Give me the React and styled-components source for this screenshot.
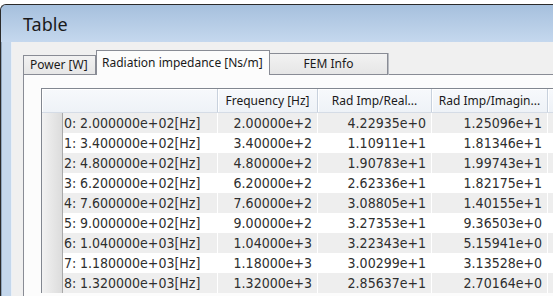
import React from "react";
import styled, { createGlobalStyle } from "styled-components";

const GlobalStyle = createGlobalStyle`
  html, body { margin: 0; padding: 0; background: #ffffff; overflow: hidden; }
  body { width: 553px; height: 296px; }
`;

const Window = styled.div`
  margin-top: 4px;
  width: 553px;
  height: 292px;
  overflow: hidden;
  border-left: 1px solid #2a2a2a;
  border-top: 1px solid #2a2a2a;
  border-radius: 6px 0 0 0;
  background: #c4d7ec;
  display: flex;
  flex-direction: column;
  box-shadow: inset 1px 1px 0 #8fa5bd;
`;

const TitleBar = styled.div`
  flex: none;
  height: 37px;
  padding-left: 22px;
  display: flex;
  align-items: center;
  background: linear-gradient(#a6c0dd, #c5d8ee);
  border-radius: 5px 0 0 0;
  font-family: "Noto Sans", "Open Sans", sans-serif;
  font-size: 18px;
  color: #1a1a1a;
`;

const Body = styled.div`
  flex: 1;
  display: flex;
  padding-left: 10px;
  min-height: 0;
`;

const Client = styled.div`
  flex: 1;
  min-width: 0;
  background: #f0f0f0;
  border-left: 1px solid #e8eff7;
  padding: 9px 0 0 11px;
  display: flex;
  flex-direction: column;
`;

const TabBar = styled.div`
  flex: none;
  height: 24px;
  display: flex;
  align-items: flex-end;
  position: relative;
  z-index: 1;
  margin-bottom: -1px;
`;

const Tab = styled.div`
  box-sizing: border-box;
  width: ${(p) => p.$w}px;
  height: ${(p) => (p.$active ? 25 : p.$h)}px;
  display: flex;
  align-items: center;
  justify-content: ${(p) => (p.$center ? "center" : "flex-start")};
  padding: 0 ${(p) => (p.$active ? 5 : 6)}px 2px;
  font-family: "Noto Sans", "Open Sans", sans-serif;
  font-size: 12px;
  color: #1a1a1a;
  white-space: nowrap;
  border: 1px solid #898c95;
  border-bottom: ${(p) => (p.$active ? "none" : "1px solid #898c95")};
  border-left: ${(p) => (p.$noLeft ? "none" : "1px solid #898c95")};
  background: ${(p) =>
    p.$active ? "#fcfcfc" : "linear-gradient(#f2f2f2, #e6e6e6)"};
  box-shadow: ${(p) => (p.$shadow ? "1px 0 0 #b9bcc2" : "none")};
`;

const Pane = styled.div`
  flex: 1;
  background: #fcfcfc;
  border-top: 1px solid #898c95;
  border-left: 1px solid #898c95;
  padding: 13px 0 0 17px;
`;

const Table = styled.div`
  border-top: 1px solid #828790;
  border-left: 1px solid #828790;
  background: #ffffff;
`;

const cols = "21px 155px 100px 114px 116px 1fr";

const HeaderRow = styled.div`
  display: grid;
  grid-template-columns: ${cols};
  height: 23px;
  background: linear-gradient(#f7f9fc, #eef2f7);
  border-bottom: 1px solid #d5dce6;
`;

const HeaderCell = styled.div`
  grid-column: ${(p) => p.$span || "auto"};
  display: flex;
  align-items: center;
  justify-content: center;
  border-right: 1px solid #c8d1dd;
  box-shadow: inset 1px 1px 0 #ffffff;
  font-family: "Noto Sans", "Open Sans", sans-serif;
  font-size: 12px;
  color: #1a1a1a;
  white-space: nowrap;
  overflow: hidden;
`;

const BodyRow = styled.div`
  display: grid;
  grid-template-columns: ${cols};
  height: 20px;
  background: ${(p) => (p.$odd ? "#ffffff" : "#eeeeee")};
`;

const VHeader = styled.div`
  background: linear-gradient(to right, #f2f2f2, #dcdcdc);
  border-right: 1px solid #a9a9a9;
`;

const Cell = styled.div`
  display: flex;
  align-items: center;
  justify-content: ${(p) => (p.$left ? "flex-start" : "flex-end")};
  padding: ${(p) => (p.$left ? "0 0 0 1px" : "0 5px 0 0")};
  border-right: 1px solid #ffffff;
  font-family: "Liberation Sans Narrow", "DejaVu Sans Condensed", "Liberation Sans", sans-serif;
  font-size: 14px;
  color: #2e2e2e;
  white-space: nowrap;
  overflow: hidden;
`;

const Index = styled.span`
  flex: none;
  width: 16px;
`;

const LabelValue = styled.span`
  flex: none;
`;

const rows = [
  ["0", "2.000000e+02", "2.00000e+2", "4.22935e+0", "1.25096e+1"],
  ["1", "3.400000e+02", "3.40000e+2", "1.10911e+1", "1.81346e+1"],
  ["2", "4.800000e+02", "4.80000e+2", "1.90783e+1", "1.99743e+1"],
  ["3", "6.200000e+02", "6.20000e+2", "2.62336e+1", "1.82175e+1"],
  ["4", "7.600000e+02", "7.60000e+2", "3.08805e+1", "1.40155e+1"],
  ["5", "9.000000e+02", "9.00000e+2", "3.27353e+1", "9.36503e+0"],
  ["6", "1.040000e+03", "1.04000e+3", "3.22343e+1", "5.15941e+0"],
  ["7", "1.180000e+03", "1.18000e+3", "3.00299e+1", "3.13528e+0"],
  ["8", "1.320000e+03", "1.32000e+3", "2.85637e+1", "2.70164e+0"],
];

export default function App() {
  return (
    <>
      <GlobalStyle />
      <Window>
        <TitleBar>Table</TitleBar>
        <Body>
          <Client>
            <TabBar>
              <Tab $w={73} $h={20}>Power [W]</Tab>
              <Tab $w={174} $active>Radiation impedance [Ns/m]</Tab>
              <Tab $w={118} $h={22} $center $noLeft $shadow>FEM Info</Tab>
            </TabBar>
            <Pane>
              <Table>
                <HeaderRow>
                  <HeaderCell $span="span 2" />
                  <HeaderCell>Frequency [Hz]</HeaderCell>
                  <HeaderCell>Rad Imp/Real...</HeaderCell>
                  <HeaderCell>Rad Imp/Imagin...</HeaderCell>
                  <HeaderCell />
                </HeaderRow>
                {rows.map((r, i) => (
                  <BodyRow key={r[0]} $odd={i % 2 === 1}>
                    <VHeader />
                    <Cell $left>
                      <Index>{r[0]}:</Index>
                      <LabelValue>{r[1]}[Hz]</LabelValue>
                    </Cell>
                    <Cell>{r[2]}</Cell>
                    <Cell>{r[3]}</Cell>
                    <Cell>{r[4]}</Cell>
                    <Cell />
                  </BodyRow>
                ))}
              </Table>
            </Pane>
          </Client>
        </Body>
      </Window>
    </>
  );
}
